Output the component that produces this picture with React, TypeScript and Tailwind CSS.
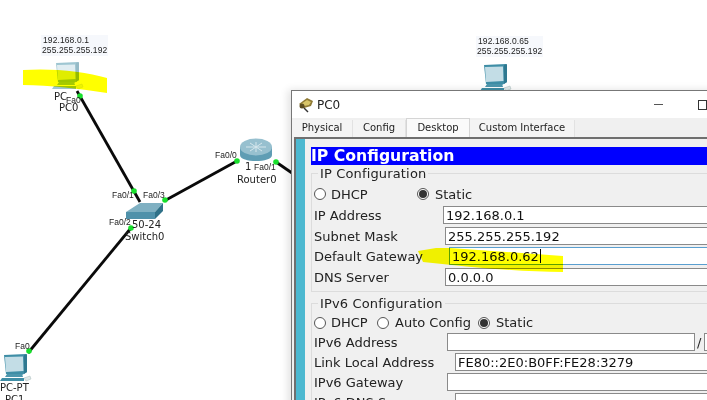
const DEJAVU = "font-['DejaVu_Sans',sans-serif]";
const ARIAL = "font-['Liberation_Sans',sans-serif]";

function Label({ x, y, text, big }: { x: number; y: number; text: string; big?: boolean }) {
  // canvas labels are placed by their centre line, like the simulator's own workspace
  return (
    <span
      className={`absolute -translate-y-1/2 whitespace-nowrap leading-none text-[#222] ${big ? "text-[10px]" : `text-[8.5px] ${ARIAL}`}`}
      style={{ left: x, top: y }}
    >
      {text}
    </span>
  );
}

function IpNote({ x, y, ip, mask }: { x: number; y: number; ip: string; mask: string }) {
  return (
    <div
      className={`absolute flex flex-col gap-[1px] bg-[#f6f8fc] px-[1px] py-[1px] text-[8.5px] leading-[9px] tracking-[0.1px] text-[#222] ${ARIAL}`}
      style={{ left: x, top: y }}
    >
      <span className="pl-[1px]">{ip}</span>
      <span>{mask}</span>
    </div>
  );
}

function PcIcon({ x, y, faded }: { x: number; y: number; faded?: boolean }) {
  return (
    <svg className={`absolute ${faded ? "opacity-50" : ""}`} style={{ left: x, top: y }} width="32" height="30" viewBox="0 0 32 30">
      <path d="M4 1 L26 0 L27 18 L22 21 L6 20 Z" fill="#3f8ea6" />
      <path d="M5 3 L23 2.500 L23.500 17 L6 18 Z" fill="#c3dde6" />
      <path d="M24 1 L27 0 L27 18 L24 20 Z" fill="#2e7890" />
      <path d="M7 20 L22 20 L23 23 L5 23 Z" fill="#4d97ae" />
      <path d="M2 24 L24 24 L24 27 L0 27 Z" fill="#3f8ea6" />
      <path d="M24 24 L30 22 L31 25 L26 27 Z" fill="#dfe8e8" stroke="#a9bdbd" strokeWidth="0.5" />
    </svg>
  );
}

function Radio({ on }: { on?: boolean }) {
  return (
    <span className="flex h-[12px] w-[12px] shrink-0 items-center justify-center rounded-full border border-[#555] bg-white">
      {on && <span className="h-[8px] w-[8px] rounded-full bg-[#333]" />}
    </span>
  );
}

function Field({
  label,
  value,
  left,
  focus,
  children,
  box = "flex-1",
}: {
  label: string;
  value?: string;
  left: string;
  focus?: boolean;
  children?: React.ReactNode;
  box?: string;
}) {
  return (
    <div className="flex h-[20px] items-center">
      <span className={`${left} shrink-0 whitespace-nowrap pl-[2px]`}>{label}</span>
      <div
        className={`flex h-[18px] min-w-0 ${box} items-center border bg-white pl-[2px] text-[#111] ${
          focus ? "border-[#5a9fd0]" : "border-[#8a8a8a]"
        }`}
      >
        {value}
        {focus && <span className="ml-[1px] h-[14px] w-px bg-black" />}
      </div>
      {children}
    </div>
  );
}

function Tab({ width, active, children }: { width: string; active?: boolean; children: string }) {
  return (
    <span
      className={`flex ${width} items-center justify-center pb-[2px] ${
        active ? "h-[19px] border-x border-t border-[#d5d5d5] bg-[#fafafa]" : "h-[17px] border-r border-[#e2e2e2] bg-[#f4f4f4]"
      }`}
    >
      {children}
    </span>
  );
}

function ConfigWindow() {
  return (
    <div className="absolute left-[291px] top-[90px] flex h-[330px] w-[430px] flex-col border-l border-t border-[#777] bg-[#f0f0f0] shadow-[-3px_0_8px_rgba(0,0,0,0.12)]">
      <div className="flex h-[27px] shrink-0 items-center bg-white pl-[6px]">
        <svg width="16" height="16" viewBox="0 0 16 16">
          <path d="M1 7 L9 1 L15 4 L13 9 L6 11 Z" fill="#8f7a35" />
          <path d="M3 7 L9 3 L13 5 L11 8 L6 9 Z" fill="#d8c56a" />
          <path d="M6 11 L10 15" stroke="#333" strokeWidth="1.500" />
          <circle cx="4" cy="9" r="2.500" fill="#5d4d22" />
        </svg>
        <span className="ml-[3px] w-[22px] text-[12px] text-[#222]">PC0</span>
        <div className="ml-[315px] h-px w-[9px] bg-[#555]" />
        <div className="ml-[35px] h-[10px] w-[9px] border border-[#333]" />
      </div>
      <div className="flex h-[19px] shrink-0 items-end text-[10px] text-[#222]">
        <Tab width="w-[61px]">Physical</Tab>
        <Tab width="w-[53px]">Config</Tab>
        <Tab width="w-[64px]" active>Desktop</Tab>
        <Tab width="w-[105px]">Custom Interface</Tab>
      </div>
      <div className="ml-[2px] flex flex-1 border-l-2 border-t-2 border-[#6f6f6f]">
        <div className="w-[9px] shrink-0 bg-[#4cb8d0]" />
        <div className="flex-1 pl-[6px] pt-[8px] text-[13px] leading-none text-[#222]">
          <div className="flex h-[18px] items-center bg-[#0000ff] text-[15.7px] font-bold text-white">IP Configuration</div>
          <div className="relative mt-[8px] h-[119px] border-y border-l border-[#dcdcdc] pt-[10px]">
            <span className="absolute -top-[7px] left-[6px] bg-[#f0f0f0] px-[2px] tracking-[0.15px]">IP Configuration</span>
            <div className="flex h-[20px] items-center pl-[2px]">
              <Radio />
              <span className="ml-[5px] w-[86px]">DHCP</span>
              <Radio on />
              <span className="ml-[6px]">Static</span>
            </div>
            <div className="mt-[1px] flex flex-col">
              <Field label="IP Address" value="192.168.0.1" left="w-[131px]" />
              <div className="mt-px">
                <Field label="Subnet Mask" value="255.255.255.192" left="w-[133px]" />
              </div>
              <Field label="Default Gateway" value="192.168.0.62" left="w-[137px]" focus />
              <div className="mt-px">
                <Field label="DNS Server" value="0.0.0.0" left="w-[133px]" />
              </div>
            </div>
          </div>
          <div className="relative mt-[11px] border-l border-t border-[#dcdcdc] pt-[9px]">
            <span className="absolute -top-[7px] left-[6px] bg-[#f0f0f0] px-[2px] tracking-[0.15px]">IPv6 Configuration</span>
            <div className="flex h-[19px] items-center pl-[2px]">
              <Radio />
              <span className="ml-[5px] w-[46px]">DHCP</span>
              <Radio />
              <span className="ml-[6px] w-[83px]">Auto Config</span>
              <Radio on />
              <span className="ml-[6px]">Static</span>
            </div>
            <Field label="IPv6 Address" left="w-[135px]" box="w-[248px] flex-none">
              <span className="ml-[2px] w-[7px] shrink-0">/</span>
              <div className="h-[18px] flex-1 border border-[#8a8a8a] bg-white" />
            </Field>
            <Field label="Link Local Address" value="FE80::2E0:B0FF:FE28:3279" left="w-[143px]" />
            <Field label="IPv6 Gateway" left="w-[135px]" />
            <Field label="IPv6 DNS Server" left="w-[143px]" />
          </div>
        </div>
      </div>
    </div>
  );
}

export default function App() {
  return (
    <div className={`relative h-[400px] w-[707px] overflow-hidden bg-white ${DEJAVU}`}>
      <IpNote x={41} y={35} ip="192.168.0.1" mask="255.255.255.192" />
      <IpNote x={476} y={36} ip="192.168.0.65" mask="255.255.255.192" />

      <PcIcon x={52} y={62} faded />
      <PcIcon x={480} y={64} />
      <PcIcon x={0} y={354} />

      <svg className="absolute left-0 top-0" width="707" height="400" viewBox="0 0 707 400">
        <g stroke="#0a0a0a" strokeWidth="2.800" fill="none">
          <path d="M77 91 L140 202" />
          <path d="M166 200 L237 161" />
          <path d="M276 162 L292 173" />
          <path d="M131 228 L28 353" />
        </g>
        {/* router */}
        <path d="M240 147 L240 155 C240 163 272 163 272 155 L272 147 Z" fill="#5f9db4" />
        <ellipse cx="256" cy="147" rx="16" ry="8.500" fill="#97c0cf" />
        <path d="M246 147 H266 M256 142 V152 M250 143 L262 151 M262 143 L250 151" stroke="#d5e6ec" strokeWidth="1" />
        {/* switch */}
        <path d="M126 212 L140 203 L163 203 L155 212 Z" fill="#7fb0c2" />
        <path d="M126 212 L155 212 L155 219 L126 219 Z" fill="#4f91aa" />
        <path d="M155 212 L163 203 L163 211 L155 219 Z" fill="#2f7188" />
        {[[80, 96], [134, 191], [165, 200], [237, 161], [276, 162], [131, 228], [29, 351]].map(([cx, cy]) => (
          <circle key={`${cx}-${cy}`} cx={cx} cy={cy} r="2.800" fill="#18e02c" />
        ))}
      </svg>

      <Label x={54} y={97} text="PC" big />
      <Label x={66} y={100} text="Fa0" />
      <Label x={59} y={108} text="PC0" big />
      <Label x={112} y={195} text="Fa0/1" />
      <Label x={143} y={195} text="Fa0/3" />
      <Label x={109} y={222} text="Fa0/2" />
      <Label x={132} y={225} text="50-24" big />
      <Label x={125} y={237} text="Switch0" big />
      <Label x={215} y={155} text="Fa0/0" />
      <Label x={245} y={167} text="1" big />
      <Label x={254} y={167} text="Fa0/1" />
      <Label x={237} y={180} text="Router0" big />
      <Label x={15} y={346} text="Fa0" />
      <Label x={0} y={388} text="PC-PT" big />
      <Label x={5} y={400} text="PC1" big />

      <ConfigWindow />

      {/* marker strokes drawn over the screenshot */}
      <svg className="absolute left-0 top-0 mix-blend-multiply" width="707" height="400" viewBox="0 0 707 400">
        <path d="M23 70 C50 68 85 71 107 78 L107 93 C80 89 50 85 23 85 Z" fill="#ffff00" />
        <path d="M418 251 L436 248 L450 248 L563 256 L563 272 C520 272 470 267 423 262 Z" fill="#ffff00" />
      </svg>
    </div>
  );
}
